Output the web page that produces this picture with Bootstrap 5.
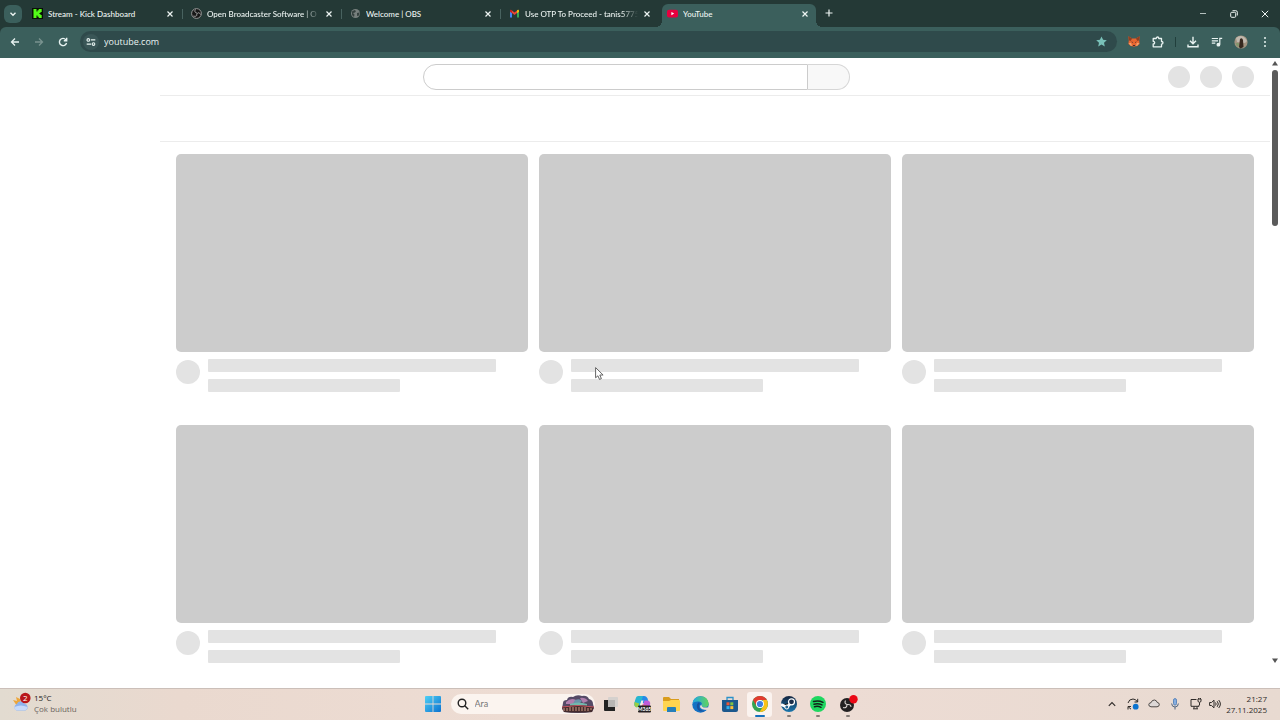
<!DOCTYPE html>
<html lang="tr">
<head>
<meta charset="utf-8">
<meta name="viewport" content="width=device-width, initial-scale=1">
<title>YouTube</title>
<link href="https://cdn.jsdelivr.net/npm/bootstrap@5.3.0/dist/css/bootstrap.min.css" rel="stylesheet">
<style>
:root{--strip:#243936;--bar:#3b5f5c;--omni:#2f4a4b}
body{font-family:Lato,"Open Sans","Noto Sans",sans-serif;font-size:8px;line-height:12px;color:#222}
button{border:0;background:none;padding:0;color:inherit;display:flex;align-items:center;justify-content:center;flex:none}
svg{display:block;flex:none}
.strip{background:var(--strip);height:27px;color:#eef5f3}
.tabmenu{width:18px;height:18px;border-radius:6px;background:var(--bar);margin:0 2px 0 4px}
.tabs{padding-top:4px}
.btab{flex:0 1 159px;min-width:0;height:23px;padding:0 8px 4px;gap:4px}
.btab a{color:inherit;text-decoration:none;gap:5px}
.btab .ttl{white-space:nowrap;overflow:hidden;font-weight:500}
.btab .ttl.long{-webkit-mask-image:linear-gradient(90deg,#000 85%,transparent);mask-image:linear-gradient(90deg,#000 85%,transparent)}
.btab.divided{background:linear-gradient(#48625f,#48625f) right 5px/1px 10px no-repeat}
.btab.on{background:var(--bar);margin:0 4px 0 2px;padding:0 6px 4px 5px;flex-basis:154px;border-radius:6px 6px 0 0;position:relative}
.btab.on::before,.btab.on::after{content:"";position:absolute;bottom:0;width:6px;height:6px}
.btab.on::before{left:-6px;background:radial-gradient(circle at 0 0,transparent 6px,var(--bar) 6px)}
.btab.on::after{right:-6px;background:radial-gradient(circle at 100% 0,transparent 6px,var(--bar) 6px)}
.xb{width:10px;height:10px}
.plus{width:18px;height:18px}
.winb{width:31px;height:27px}
.toolwrap{background:var(--strip)}
.tool{background:var(--bar);height:31px;border-radius:6px 6px 0 0;padding:0 3px 2px;color:#e8f3f1}
.tb{width:24px;height:24px}
.omni{background:var(--omni);height:21px;border-radius:11px;margin:0 5px;padding:0 10px 0 3px;gap:5px}
.site{width:16px;height:16px;border-radius:8px;background:#3a5657}
.omni input{border:0;background:none;color:#e8f3f1;font-family:"Open Sans","Noto Sans",sans-serif;font-size:9px;line-height:14px;padding:0;outline:0;min-width:0}
.sep{width:1px;height:10px;background:#213f3c;margin:0 5px}
.pg{background:#fff;min-height:0;overflow:hidden;position:relative}
.top{display:grid;grid-template-columns:1fr minmax(0,427px) 1fr;height:37px;padding:0 16px 0 19px}
.sbox input{height:26px;border:1px solid #ccc;border-radius:13px 0 0 13px;min-width:0;outline:0}
.sbox button{width:42px;height:26px;border:1px solid #d6d6d6;border-left:0;border-radius:0 13px 13px 0;background:#f8f8f8}
.users{gap:10px}
.dot{background:#e3e3e3;border-radius:50%;flex:none}
.dot.s{width:22px;height:22px}
.dot.m{width:24px;height:24px;margin-top:1px}
.feed{margin-left:160px;border-top:1px solid #ececec}
.chips{height:46px;border-bottom:1px solid #ececec}
.vids{display:grid;grid-template-columns:repeat(3,1fr);gap:33px 11px;padding:12px 16px}
.thumb{aspect-ratio:16/9;background:#ccc;border-radius:5px;margin-bottom:7px}
.ln{height:13px;background:#e3e3e3;border-radius:1px}
.ln.a{width:90%;margin-bottom:7px}
.ln.b{width:60%}
.sbar{width:10px;padding:3px 0 25px}
.sthumb{width:6px;height:156px;border-radius:3px;background:#5b5b5b;margin-top:4px}
.ptr{position:absolute;left:46.5%;top:309px}
.task{display:grid;grid-template-columns:1fr auto 1fr;height:32px;padding-bottom:1px;border-top:1px solid #cbbfb9;background:linear-gradient(90deg,#e2dbd0,#ead9cf 14%,#eddcd3 40%,#eddcd4 65%,#e8dad1)}
.wx{padding:0 0 2px 12px;gap:3px;line-height:11px}
.wx,.clock{font-family:"Open Sans","Noto Sans",sans-serif}
.muted{color:#6b645e}
.mid{margin-left:3px}
.start{width:25px;height:30px}
.view{width:33px;height:30px}
.ara{width:144px;height:20px;border-radius:10px;background:#fbf4ef;padding:0 0 0 6px;margin:0 0 0 5px;gap:6px}
.ara input{border:0;background:none;outline:0;padding:0;min-width:0;font-size:9px;line-height:14px}
.ara input::placeholder{color:#777;opacity:1}
.apps{width:235px}
.app{flex:1 1 0;height:30px;position:relative}
.app.cur::before{content:"";position:absolute;width:25px;height:25px;border-radius:3px;background:#fbf3ef}
.app svg{position:relative}
.app.run::after,.app.cur::after{content:"";position:absolute;bottom:2px;width:4px;height:2px;border-radius:1px;background:#857c77}
.app.cur::after{width:10px;background:#1470bd}
.tray{gap:5px;padding:0 13px 1px 0;color:#2e2a28}
.tray button{width:16px;height:20px}
.tray .snd{width:12px}
.clock{line-height:11px;text-align:right}
</style>
</head>
<body class="vh-100 d-flex flex-column overflow-hidden">
<header>
<div class="strip d-flex align-items-center">
<button class="tabmenu" aria-label="Sekmelerde ara"><svg width="8" height="8" viewBox="0 0 8 8" fill="none" stroke="currentColor" stroke-width="1.4"><path d="M1.5 2.8 4 5.2 6.500 2.800"/></svg></button>
<nav class="tabs d-flex flex-grow-1">
<div class="btab divided d-flex align-items-center"><a href="#" class="d-flex align-items-center flex-grow-1 overflow-hidden"><svg width="11" height="11" viewBox="0 0 11 11"><path fill="#091006" d="M0 0h11v11H0z"/><path fill="#53fc18" d="M1.500 1h3v2.500h1V2.300h1.200V1h3v3H8.500v1H7.400v1h1.100v1h1.200v3h-3V8.700H5.500V7.500h-1V10h-3z"/></svg><span class="ttl flex-grow-1">Stream - Kick Dashboard</span></a><button class="xb" aria-label="Kapat"><svg width="8" height="8" viewBox="0 0 8 8" stroke="currentColor" stroke-width="1.200"><path d="m1.500 1.500 5 5m0-5-5 5"/></svg></button></div>
<div class="btab divided d-flex align-items-center"><a href="#" class="d-flex align-items-center flex-grow-1 overflow-hidden"><svg width="11" height="11" viewBox="0 0 22 22"><circle cx="11" cy="11" r="9.800" fill="#171717" stroke="#aaa" stroke-width="1.700"/><g fill="none" stroke="#aaa" stroke-width="2"><path d="M9 3c-3 4 0 7 3 7M19 13c-2-5-6-4-7-1M5 16c5 2 8-1 6-4"/></g></svg><span class="ttl long flex-grow-1">Open Broadcaster Software | O</span></a><button class="xb" aria-label="Kapat"><svg width="8" height="8" viewBox="0 0 8 8" stroke="currentColor" stroke-width="1.200"><path d="m1.500 1.500 5 5m0-5-5 5"/></svg></button></div>
<div class="btab divided d-flex align-items-center"><a href="#" class="d-flex align-items-center flex-grow-1 overflow-hidden"><svg width="11" height="11" viewBox="0 0 11 11"><circle cx="5.500" cy="5.500" r="4.500" fill="#777f7d"/><path d="M2 3.500 4.500 2l1.500 1-1 1.500-2 .5 1.500 1.500L4 9 2 7zM7 5l2.500-.5L9 7.500 7 8z" fill="#35413f"/></svg><span class="ttl flex-grow-1">Welcome | OBS</span></a><button class="xb" aria-label="Kapat"><svg width="8" height="8" viewBox="0 0 8 8" stroke="currentColor" stroke-width="1.200"><path d="m1.500 1.500 5 5m0-5-5 5"/></svg></button></div>
<div class="btab d-flex align-items-center"><a href="#" class="d-flex align-items-center flex-grow-1 overflow-hidden"><svg width="11" height="11" viewBox="0 0 11 11"><path fill="#4285f4" d="M1 3h2v6.500H1z"/><path fill="#34a853" d="M8 3h2v6.500H8z"/><path fill="#ea4335" d="m3 2.500 2.500 2 2.500-2v2.600l-2.500 2-2.500-2z"/><path fill="#c5221f" d="M1 3c0-1.400 1.200-1.500 2-.7v2.900L1 3.700z"/><path fill="#fbbc04" d="M10 3c0-1.400-1.200-1.500-2-.7v2.900l2-1.500z"/></svg><span class="ttl long flex-grow-1">Use OTP To Proceed - tanis5775</span></a><button class="xb" aria-label="Kapat"><svg width="8" height="8" viewBox="0 0 8 8" stroke="currentColor" stroke-width="1.200"><path d="m1.500 1.500 5 5m0-5-5 5"/></svg></button></div>
<div class="btab on d-flex align-items-center"><a href="#" class="d-flex align-items-center flex-grow-1 overflow-hidden"><svg width="11" height="11" viewBox="0 0 11 11"><rect y="1.700" width="11" height="7.800" rx="2" fill="#e8003f"/><path fill="#fff" d="M4.400 4v3.200l2.800-1.600z"/></svg><span class="ttl flex-grow-1">YouTube</span></a><button class="xb" aria-label="Kapat"><svg width="8" height="8" viewBox="0 0 8 8" stroke="currentColor" stroke-width="1.200"><path d="m1.500 1.500 5 5m0-5-5 5"/></svg></button></div>
<button class="plus" aria-label="Yeni sekme"><svg width="8" height="8" viewBox="0 0 8 8" stroke="currentColor" stroke-width="1.200"><path d="M4 .5v7M.5 4h7"/></svg></button>
</nav>
<button class="winb" aria-label="Simge durumuna küçült"><svg width="8" height="8" viewBox="0 0 8 8" stroke="#b4c0be"><path d="M1 3.500h6"/></svg></button>
<button class="winb" aria-label="Geri yükle"><svg width="8" height="8" viewBox="0 0 8 8" fill="none" stroke="currentColor"><rect x=".7" y="2.300" width="5" height="5" rx="1"/><path d="M2.500.7h3.300q1.500 0 1.500 1.500v3.300"/></svg></button>
<button class="winb" aria-label="Pencereyi kapat"><svg width="8" height="8" viewBox="0 0 8 8" stroke="currentColor"><path d="m.8.8 6.400 6.400m0-6.400L.8 7.200"/></svg></button>
</div>
<div class="toolwrap"><div class="tool d-flex align-items-center">
<button class="tb" aria-label="Geri"><svg width="10" height="10" viewBox="0 0 10 10" fill="none" stroke="currentColor" stroke-width="1.300"><path d="M9 5H1.500M5 1.500 1.500 5 5 8.500"/></svg></button>
<button class="tb" aria-label="İleri"><svg width="10" height="10" viewBox="0 0 10 10" fill="none" stroke="#79938f" stroke-width="1.300"><path d="M1 5h7.500M5 1.500 8.500 5 5 8.500"/></svg></button>
<button class="tb" aria-label="Yenile"><svg width="10" height="10" viewBox="0 0 10 10" fill="none" stroke="currentColor" stroke-width="1.400"><path d="M8.500 6A3.600 3.600 0 1 1 7.800 2.700L8.500 3.500M8.700.8v3H5.800"/></svg></button>
<div class="omni d-flex align-items-center flex-grow-1">
<button class="site" aria-label="Site bilgileri"><svg width="10" height="10" viewBox="0 0 10 10" fill="none" stroke="currentColor" stroke-width="1.100"><circle cx="2.300" cy="2.900" r="1.300"/><circle cx="7.500" cy="7.100" r="1.300"/><path d="M4.800 2.900h4.500M.7 7.100h4.500"/></svg></button>
<input class="flex-grow-1" value="youtube.com" aria-label="Adres">
<button aria-label="Yer işareti"><svg width="11" height="11" viewBox="0 0 11 11" fill="#79c0b8"><path d="m5.500.4 1.600 3.400 3.700.4L8 6.700l.8 3.800-3.300-1.900-3.300 1.900.8-3.800L.2 4.200l3.700-.4z"/></svg></button>
</div>
<button class="tb" aria-label="MetaMask"><svg width="12" height="11" viewBox="0 0 12 11"><path fill="#e8652f" d="M.3.300 4.300 2.500h3.400l4-2.200-.5 4.200.4 3.500-2.700 2.300-1.200-.4-.7.800H5l-.7-.8-1.200.4L.400 8l.4-3.500z"/><path fill="#8f4022" d="m.3.300 3.900 2.200L2.500 5 .8 4.300zM11.700.3 7.800 2.500 9.500 5l1.700-.7z"/><path fill="#f3a06b" d="M.6 7.300 3 6.800l1 2.800-1 .5zM11.400 7.300 9 6.800 8 9.600l1 .5z"/><path fill="#3c3134" d="m3 5.500 1.800.4.200 1.200zM9 5.500l-1.800.4L7 7.100zM4.900 9h2.200l-.3 1.300H5.200z"/></svg></button>
<button class="tb" aria-label="Uzantılar"><svg width="12" height="12" viewBox="0 0 12 12" fill="none" stroke="currentColor" stroke-width="1.300" stroke-linejoin="round"><path d="M1.200 2.500h3c0-2 2.600-2 2.600 0h2.700v3c2 0 2 2.600 0 2.600v2.700H1.200V8c2-.1 2-2.600 0-2.700z"/></svg></button>
<span class="sep"></span>
<button class="tb" aria-label="İndirilenler"><svg width="12" height="12" viewBox="0 0 12 12" fill="none" stroke="currentColor" stroke-width="1.400"><path d="M6 .8v6.700M3 4.800l3 3 3-3M1 8.500v2.300h10V8.500"/></svg></button>
<button class="tb" aria-label="Medya"><svg width="12" height="12" viewBox="0 0 12 12" fill="none" stroke="currentColor" stroke-width="1.200"><path d="M.8 2.500H7M.8 4.800H7M.8 7.100h3.500M8.800 8.500V2.300h2.400"/><circle cx="7.400" cy="8.700" r="1.300" fill="currentColor"/></svg></button>
<button class="tb" aria-label="Profil"><svg width="14" height="14" viewBox="0 0 14 14"><circle cx="7" cy="7" r="6.600" fill="#a39480"/><path d="M2 3q5-4 9 0l2 3-2 2-8-1z" fill="#c0b9ae"/><path d="M6 4q2-2 3 1l.5 7-3 1.500L5 12z" fill="#37291f"/><path d="M1.500 8H5v4Q2 11 1.500 8" fill="#85966d"/></svg></button>
<button class="tb" aria-label="Menü"><svg width="4" height="12" viewBox="0 0 4 12" fill="currentColor"><circle cx="2" cy="2" r="1"/><circle cx="2" cy="6" r="1"/><circle cx="2" cy="10" r="1"/></svg></button>
</div></div>
</header>

<main class="pg d-flex flex-grow-1">
<div class="flex-grow-1">
<div class="top align-items-center">
<span></span>
<form class="sbox d-flex"><input class="flex-grow-1" aria-label="Ara"><button type="button" aria-label="Ara"></button></form>
<div class="users d-flex justify-content-end"><span class="dot s"></span><span class="dot s"></span><span class="dot s"></span></div>
</div>
<div class="feed">
<div class="chips"></div>
<div class="vids">
<article><div class="thumb"></div><div class="d-flex gap-2"><span class="dot m"></span><div class="flex-grow-1"><div class="ln a"></div><div class="ln b"></div></div></div></article>
<article><div class="thumb"></div><div class="d-flex gap-2"><span class="dot m"></span><div class="flex-grow-1"><div class="ln a"></div><div class="ln b"></div></div></div></article>
<article><div class="thumb"></div><div class="d-flex gap-2"><span class="dot m"></span><div class="flex-grow-1"><div class="ln a"></div><div class="ln b"></div></div></div></article>
<article><div class="thumb"></div><div class="d-flex gap-2"><span class="dot m"></span><div class="flex-grow-1"><div class="ln a"></div><div class="ln b"></div></div></div></article>
<article><div class="thumb"></div><div class="d-flex gap-2"><span class="dot m"></span><div class="flex-grow-1"><div class="ln a"></div><div class="ln b"></div></div></div></article>
<article><div class="thumb"></div><div class="d-flex gap-2"><span class="dot m"></span><div class="flex-grow-1"><div class="ln a"></div><div class="ln b"></div></div></div></article>
</div>
</div>
</div>
<div class="sbar d-flex flex-column align-items-center">
<svg width="6" height="5" viewBox="0 0 6 5" fill="#555"><path d="M3 0 6 4.500H0z"/></svg>
<div class="sthumb"></div>
<svg class="mt-auto" width="6" height="5" viewBox="0 0 6 5" fill="#555"><path d="M3 5 6 .5H0z"/></svg>
</div>
<svg class="ptr" width="9" height="14" viewBox="0 0 9 14"><path d="M.6.600v10.200l2.300-2 1.600 3.600 1.900-.8-1.600-3.600h3.300z" fill="#fff" stroke="#555" stroke-width=".9"/></svg>
</main>

<footer class="task">
<div class="wx d-flex align-items-center">
<svg width="19" height="22" viewBox="0 0 19 22"><path d="M1 8l4 1-1-4 4 2 1 5-4 2z" fill="#eda63a"/><path d="M4.500 18.500a3.500 3.500 0 0 1 .3-6.500 4.300 4.300 0 0 1 8-.2 3.500 3.500 0 0 1 .7 6.700z" fill="#8fb3ee"/><path d="M2.500 15q6-3 13 0-.5 3.300-3 3.300H5q-2.500 0-2.500-3.300" fill="#c7dafa"/><circle cx="13.300" cy="6" r="5.300" fill="#b9171c"/><text x="13.300" y="9" font-size="8" text-anchor="middle" fill="#fff">2</text></svg>
<div><div>15°C</div><div class="muted">Çok bulutlu</div></div>
</div>
<div class="mid d-flex align-items-center">
<button class="start" aria-label="Başlat"><svg width="16" height="16" viewBox="0 0 16 16"><defs><linearGradient id="w" x1="0" y1="0" x2="1" y2="1"><stop stop-color="#4fd0f5"/><stop offset="1" stop-color="#0b72d0"/></linearGradient></defs><path fill="url(#w)" d="M1 0h6.600v7.600H0V1q0-1 1-1zm7.400 0H15q1 0 1 1v6.600H8.400zM0 8.400h7.600V16H1q-1 0-1-1zm8.400 0H16V15q0 1-1 1H8.400z"/></svg></button>
<label class="ara d-flex align-items-center"><svg width="12" height="12" viewBox="0 0 12 12" fill="none" stroke="#222" stroke-width="1.400"><circle cx="5" cy="5" r="3.800"/><path d="m7.800 7.800 3.400 3.400"/></svg><input class="flex-grow-1" placeholder="Ara" aria-label="Ara"><svg width="34" height="18" viewBox="0 0 34 18"><path fill="#554a66" d="M2 8q0-3 4-3 1-4 6-3 4-3 9-1 5-1 7 3 4 1 4 5l1 4-2 4q-14 2-28 0l-2-3z"/><path fill="#b07fae" d="M5 7q5-5 10-2l-3 4H5zM19 3q5-1 8 3l-5 2z"/><path fill="#6d92ab" d="M14 5q5-2 7 1l-3 3h-6z"/><path fill="#72b8ae" d="M9 9q8-3 17 0v3H9z"/><path fill="#442b2d" d="M1 12q16-4 32 0l-2 5q-14 1-28 0z"/><path stroke="#d09b85" stroke-width="1" d="M3 13v3m3-3v3m3-4v4m3-4v4m3-4v4m3-4v4m3-4v4m3-4v4m3-3v3m3-3v2"/><path stroke="#c55360" fill="none" d="M1 12q16-3 32 0"/></svg></label>
<button class="view" aria-label="Görev görünümü"><svg width="14" height="14" viewBox="0 0 14 14"><rect x="4" width="10" height="10" rx="1" fill="#d5d1ce"/><path fill="#232323" d="M0 3h4v7h7v4H1q-1 0-1-1z"/><path fill="#777" d="M4 3h7v7H4z" opacity=".3"/></svg></button>
<div class="apps d-flex">
<button class="app" aria-label="Microsoft 365 Copilot"><svg width="18" height="18" viewBox="0 0 18 18"><path fill="#2489e8" d="M5 1h6q3 0 4 4l.5 3H10z"/><path fill="#28b6d0" d="M5 1h5L7.500 9Q6.500 13 3 12 .5 11 1.500 7.500L2.500 4Q3.200 1 5 1"/><path fill="#98ce45" d="m1.500 7 4.800 1.500L5.500 11q-1 2-3 1-1.700-1.500-1-5z"/><path fill="#c05bd8" d="M11.500 5.500H14q4 0 3 4.500l-1 3H9z"/><path fill="#ed6c82" d="m9 9.500 6 1-1 4H7z"/><path fill="#f5ece8" d="m8.500 5.500 2 0-1.700 5h-2z"/><rect x="5" y="10.500" width="13" height="7" rx="1" fill="#241f22"/><text x="11.500" y="16" text-anchor="middle" font-size="5" font-weight="700" fill="#fff">M365</text></svg></button>
<button class="app" aria-label="Dosya Gezgini"><svg width="17" height="15" viewBox="0 0 17 15"><path fill="#d99c1d" d="M0 1q0-1 1-1h5l2 2h8v5H0z"/><path fill="#ffd44f" d="M0 4h6l2-1h8q1 0 1 1v9q0 1-1 1H1q-1 0-1-1z"/><path fill="#267fba" d="M4 11q0-1 1-1h7q1 0 1 1v4H4z"/></svg></button>
<button class="app" aria-label="Edge"><svg width="17" height="17" viewBox="0 0 17 17"><defs><linearGradient id="e" x2="1"><stop stop-color="#21a9e5"/><stop offset="1" stop-color="#62d35b"/></linearGradient></defs><circle cx="8.500" cy="8.500" r="8.200" fill="#1572c4"/><path fill="url(#e)" d="M.5 7Q2 .3 8.500.3q7 0 8.200 7 0 4-4 4-3 0-3-2 1-3-2.700-3.700Q3 5 .5 7"/><path fill="#1a519d" d="M7 6Q4 8 5 12q2 5 8 3-5 0-6-4-.5-2 1-3z"/><path fill="#eddcd4" d="M9.500 8.500q-.5 4 6.900 2.800l.6 1.200-1.500 1.500q-6.500 0-7.500-3 0-2 1.500-2.500"/></svg></button>
<button class="app" aria-label="Store"><svg width="16" height="17" viewBox="0 0 16 17"><path fill="none" stroke="#2b91c9" stroke-width="1.300" d="M5 4V1.500h6V4"/><path fill="#1c588d" d="M0 4h16v10q0 2-2 2H2q-2 0-2-2z"/><path fill="#ef5735" d="M4.500 6.300h3v3h-3z"/><path fill="#7fc242" d="M8.300 6.300h3v3h-3z"/><path fill="#31b2ed" d="M4.500 10.100h3v3h-3z"/><path fill="#fdbd35" d="M8.300 10.100h3v3h-3z"/></svg></button>
<button class="app cur" aria-label="Chrome"><svg width="16" height="16" viewBox="0 0 16 16"><circle cx="8" cy="8" r="8" fill="#34a353"/><path fill="#e33b2e" d="M1.100 4A8 8 0 0 1 14.900 4H8L4.500 10z"/><path fill="#fbc116" d="M14.900 4Q17 8 14.500 12.700 12 16 7.500 16L11.500 10 11 4z"/><circle cx="8" cy="8" r="4" fill="#fff"/><circle cx="8" cy="8" r="3.100" fill="#3f7de0"/></svg></button>
<button class="app run" aria-label="Steam"><svg width="16" height="16" viewBox="0 0 16 16"><defs><linearGradient id="s" x2="0" y2="1"><stop stop-color="#15243e"/><stop offset="1" stop-color="#1977ae"/></linearGradient></defs><circle cx="8" cy="8" r="8" fill="url(#s)"/><path stroke="#fff" stroke-width="2.800" d="M0 8.500 6 11l4-4"/><circle cx="10.500" cy="5.800" r="3" fill="#1b2e49" stroke="#fff" stroke-width="1.200"/><circle cx="5.800" cy="11" r="2" fill="#276691" stroke="#fff"/></svg></button>
<button class="app run" aria-label="Spotify"><svg width="16" height="16" viewBox="0 0 16 16"><circle cx="8" cy="8" r="8" fill="#1ed760"/><path fill="none" stroke="#112418" stroke-linecap="round" stroke-width="1.500" d="M3.500 5.500q5-1.500 9.500.8M4 8.200q4-1.200 8 .7M4.500 10.700q3.500-.9 6.500.6"/></svg></button>
<button class="app run" aria-label="OBS"><svg width="20" height="18" viewBox="0 0 20 18"><circle cx="9" cy="10" r="7" fill="#222021"/><path fill="none" stroke="#dad5d2" stroke-width="1.100" d="M7.500 5.500q-1.500 3 1.500 4 4-.5 4 2.500M9 9.500q0 4-4 3"/><circle cx="15.500" cy="4.200" r="4.200" fill="#ea0916"/></svg></button>
</div>
</div>
<div class="tray d-flex align-items-center justify-content-end">
<button aria-label="Gizli simgeler"><svg width="8" height="6" viewBox="0 0 8 6" fill="none" stroke="currentColor" stroke-width="1.100"><path d="m.8 4.800 3.200-3.300 3.200 3.300"/></svg></button>
<button aria-label="Güncelleme"><svg width="12" height="12" viewBox="0 0 12 12" fill="none" stroke="currentColor"><path d="M1 5Q2 1 6 1q3 0 4.500 3M10.700.8V4H7.500M1 11.500V8.500h3M1.300 8.800 4 11.200"/><circle cx="8.700" cy="8.700" r="2.900" fill="#0b73cf" stroke="none"/></svg></button>
<button aria-label="OneDrive"><svg width="12" height="9" viewBox="0 0 12 9"><path fill="#ddd8d7" stroke="#4d4947" d="M3 7.800Q.6 7.500.8 5.500 1 3.800 3 3.700 4 .8 6.500 1q2.200.3 2.700 2.400 2.200.3 2.100 2.300-.2 2-2.300 2.100z"/></svg></button>
<button aria-label="Mikrofon"><svg width="8" height="12" viewBox="0 0 8 12" fill="none" stroke="#51657e"><rect x="2.500" y=".6" width="3" height="6.500" rx="1.500" fill="#86aee0" stroke="#5c86bb"/><path d="M.6 5.500Q.8 9 4 9t3.400-3.500M4 9v2.500"/></svg></button>
<button aria-label="Ağ"><svg width="12" height="12" viewBox="0 0 12 12" fill="none" stroke="currentColor"><path d="M6.500 1.500H1v6.800h8V7M3 10.800h5M4 8.500v2M7 8.500v2"/><path d="M8 1h3v2.500q-1.500 1.700-3 0zM9.500 4.500V7M8.700 0v1M10.500 0v1"/></svg></button>
<button class="snd" aria-label="Ses"><svg width="12" height="10" viewBox="0 0 12 10" fill="none" stroke="currentColor"><path d="M.6 3.500H2.500L5 1.200v7.600L2.500 6.500H.6zM6.500 3.500q1.300 1.500 0 3M8.200 2.200q2.300 2.800 0 5.600M9.700 1q3.400 4 0 8"/></svg></button>
<div class="clock"><div>21:27</div><div>27.11.2025</div></div>
</div>
</footer>
<script src="https://cdn.jsdelivr.net/npm/bootstrap@5.3.0/dist/js/bootstrap.bundle.min.js"></script>
</body>
</html>
